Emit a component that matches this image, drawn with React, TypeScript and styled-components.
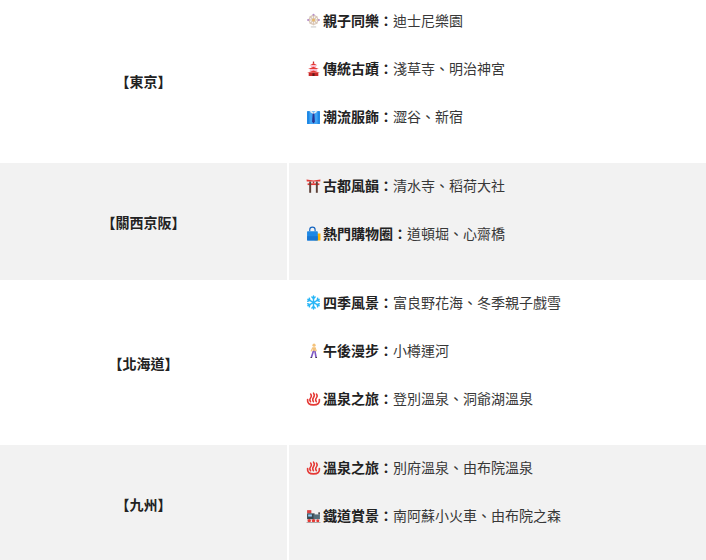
import { Fragment } from "react";
import styled, { createGlobalStyle } from "styled-components";

const GlobalStyle = createGlobalStyle`
  html, body {
    margin: 0;
    padding: 0;
    background: #ffffff;
  }
  body {
    font-family: "Noto Sans CJK TC", "Noto Sans", sans-serif;
    color: #333333;
  }
`;

const Table = styled.div`
  display: grid;
  grid-template-columns: 287px 1fr;
  column-gap: 2px;
  margin-top: -2px;
  width: 706px;
  background: #ffffff;
`;

const RegionCell = styled.div<{ $shade: boolean }>`
  display: flex;
  align-items: center;
  justify-content: center;
  background: ${({ $shade }) => ($shade ? "#f2f2f2" : "#ffffff")};
  font-size: 14px;
  font-weight: 700;
  color: #222222;
`;

const SpotCell = styled.div<{ $shade: boolean }>`
  display: flex;
  flex-direction: column;
  padding: 10px 16px 11px 17px;
  background: ${({ $shade }) => ($shade ? "#f2f2f2" : "#ffffff")};
`;

const Spot = styled.div`
  display: flex;
  align-items: center;
  height: 24px;
  margin-bottom: 24px;
  font-size: 14px;
  line-height: 24px;
  color: #383838;
  white-space: nowrap;
`;

const IconBox = styled.span`
  display: inline-flex;
  width: 15px;
  height: 15px;
  margin-right: 2px;
  svg {
    width: 15px;
    height: 15px;
  }
`;

const Label = styled.b`
  font-weight: 700;
  color: #222222;
`;

const icons: Record<string, JSX.Element> = {
  wheel: (
    <svg viewBox="0 0 14 14">
      <g stroke="#d9c7b8" strokeWidth="1.2" fill="none">
        <circle cx="7" cy="6.5" r="4" />
        <line x1="7" y1="1.5" x2="7" y2="11.5" />
        <line x1="2" y1="6.5" x2="12" y2="6.5" />
        <line x1="3.5" y1="3" x2="10.5" y2="10" />
        <line x1="10.5" y1="3" x2="3.5" y2="10" />
      </g>
      <circle cx="7" cy="6.5" r="1.4" fill="#e8b96a" />
      <circle cx="7" cy="1.6" r="1" fill="#b58ec9" />
      <circle cx="2" cy="6.5" r="1" fill="#b58ec9" />
      <circle cx="12" cy="6.5" r="1" fill="#b58ec9" />
      <line x1="4.5" y1="13" x2="9.5" y2="13" stroke="#c9c9c9" strokeWidth="1" />
    </svg>
  ),
  pagoda: (
    <svg viewBox="0 0 14 14">
      <rect x="6.4" y="0.5" width="1.2" height="2" fill="#c62828" />
      <path d="M3.5 4 L7 2 L10.5 4 Z" fill="#e53935" />
      <rect x="4.5" y="4" width="5" height="1.6" fill="#f8bbd0" />
      <path d="M2 7.5 L7 5.3 L12 7.5 Z" fill="#e53935" />
      <rect x="3.5" y="7.5" width="7" height="1.8" fill="#f8bbd0" />
      <path d="M1 11 L7 8.8 L13 11 Z" fill="#e53935" />
      <rect x="2.5" y="11" width="9" height="3" fill="#c62828" />
      <rect x="6" y="11.5" width="2" height="2.5" fill="#5d1a1a" />
    </svg>
  ),
  shirt: (
    <svg viewBox="0 0 14 14">
      <rect x="1" y="2" width="12" height="12" rx="1.5" fill="#42a5f5" />
      <rect x="1" y="2" width="2.2" height="12" fill="#1e88e5" />
      <rect x="10.8" y="2" width="2.2" height="12" fill="#1e88e5" />
      <path d="M4 1 L7 3.5 L10 1 L10 3 L7 5 L4 3 Z" fill="#eceff1" />
      <path d="M6.2 4.2 L7.8 4.2 L8.3 12 L7 13.5 L5.7 12 Z" fill="#283593" />
    </svg>
  ),
  torii: (
    <svg viewBox="0 0 14 14">
      <path d="M0.5 1.5 Q7 3 13.5 1.5 L13.3 3.3 L0.7 3.3 Z" fill="#e53935" />
      <rect x="1.5" y="5" width="11" height="1.6" fill="#e53935" />
      <rect x="3" y="3.3" width="1.8" height="10.5" fill="#5d4037" />
      <rect x="9.2" y="3.3" width="1.8" height="10.5" fill="#5d4037" />
      <rect x="6.3" y="3.3" width="1.4" height="1.7" fill="#c62828" />
    </svg>
  ),
  bags: (
    <svg viewBox="0 0 14 14">
      <rect x="8" y="7" width="5.5" height="6.5" fill="#ffb300" />
      <path d="M3.5 5 V3.5 A2.5 2.5 0 0 1 8.5 3.5 V5" stroke="#1565c0" strokeWidth="1.1" fill="none" />
      <rect x="1" y="5" width="10" height="8.5" rx="0.6" fill="#1e88e5" />
      <rect x="1" y="9.5" width="10" height="4" fill="#1976d2" />
    </svg>
  ),
  snow: (
    <svg viewBox="0 0 14 14">
      <g stroke="#29b6f6" strokeWidth="1.4" strokeLinecap="round" fill="none">
        <line x1="7" y1="1" x2="7" y2="13" />
        <line x1="1.8" y1="4" x2="12.2" y2="10" />
        <line x1="1.8" y1="10" x2="12.2" y2="4" />
        <path d="M5.5 1.8 L7 3.2 L8.5 1.8" />
        <path d="M5.5 12.2 L7 10.8 L8.5 12.2" />
        <path d="M1.6 5.8 L3.5 5 L3.1 3" />
        <path d="M12.4 8.2 L10.5 9 L10.9 11" />
        <path d="M1.6 8.2 L3.5 9 L3.1 11" />
        <path d="M12.4 5.8 L10.5 5 L10.9 3" />
      </g>
    </svg>
  ),
  walk: (
    <svg viewBox="0 0 14 14">
      <circle cx="7.5" cy="2" r="1.5" fill="#f4c27a" />
      <path d="M6.3 4 L8.6 4 L9 8 L6.2 8 Z" fill="#f4c27a" />
      <path d="M6.3 4.5 L4.8 7.5" stroke="#f4c27a" strokeWidth="1" strokeLinecap="round" />
      <path d="M8.6 4.5 L9.6 7.3" stroke="#f4c27a" strokeWidth="1" strokeLinecap="round" />
      <path d="M6.8 8 L5 13.5" stroke="#7e57c2" strokeWidth="1.5" strokeLinecap="round" />
      <path d="M8.4 8 L9.4 13.5" stroke="#7e57c2" strokeWidth="1.5" strokeLinecap="round" />
      <path d="M4.3 13.5 L5.5 13.5 M9 13.5 L10.3 13.5" stroke="#424242" strokeWidth="1" />
    </svg>
  ),
  onsen: (
    <svg viewBox="0 0 14 14">
      <path d="M1.5 8 Q1 13 7 13 Q13 13 12.5 8" stroke="#e53935" strokeWidth="1.6" fill="none" strokeLinecap="round" />
      <g stroke="#e53935" strokeWidth="1.4" fill="none" strokeLinecap="round">
        <path d="M4.3 10 Q2.8 8.2 4.3 6.4 Q5.8 4.6 4.3 2.8" />
        <path d="M7 10 Q5.5 8 7 6 Q8.5 4 7 2" />
        <path d="M9.7 10 Q8.2 8.2 9.7 6.4 Q11.2 4.6 9.7 2.8" />
      </g>
    </svg>
  ),
  train: (
    <svg viewBox="0 0 14 14">
      <rect x="1" y="2" width="4" height="3" fill="#d84343" />
      <rect x="1" y="5" width="7" height="5.5" fill="#37474f" />
      <rect x="7" y="6" width="6" height="4.5" fill="#546e7a" />
      <rect x="2" y="6" width="3.5" height="2" fill="#90caf9" />
      <rect x="11.5" y="4" width="1.5" height="2" fill="#424242" />
      <circle cx="3" cy="11.8" r="1.6" fill="#e53935" />
      <circle cx="7" cy="11.8" r="1.6" fill="#e53935" />
      <circle cx="11" cy="11.8" r="1.4" fill="#e53935" />
      <rect x="0.5" y="13.2" width="13" height="0.8" fill="#9e9e9e" />
    </svg>
  ),
};

type SpotItem = { icon: string; label: string; places: string };
type Region = { name: string; spots: SpotItem[] };

const regions: Region[] = [
  {
    name: "【東京】",
    spots: [
      { icon: "wheel", label: "親子同樂", places: "迪士尼樂園" },
      { icon: "pagoda", label: "傳統古蹟", places: "淺草寺、明治神宮" },
      { icon: "shirt", label: "潮流服飾", places: "澀谷、新宿" },
    ],
  },
  {
    name: "【關西京阪】",
    spots: [
      { icon: "torii", label: "古都風韻", places: "清水寺、稻荷大社" },
      { icon: "bags", label: "熱門購物圈", places: "道頓堀、心齋橋" },
    ],
  },
  {
    name: "【北海道】",
    spots: [
      { icon: "snow", label: "四季風景", places: "富良野花海、冬季親子戲雪" },
      { icon: "walk", label: "午後漫步", places: "小樽運河" },
      { icon: "onsen", label: "溫泉之旅", places: "登別溫泉、洞爺湖溫泉" },
    ],
  },
  {
    name: "【九州】",
    spots: [
      { icon: "onsen", label: "溫泉之旅", places: "別府溫泉、由布院溫泉" },
      { icon: "train", label: "鐵道賞景", places: "南阿蘇小火車、由布院之森" },
    ],
  },
];

const App = () => {
  return (
    <>
      <GlobalStyle />
      <Table>
        {regions.map((region, i) => (
          <Fragment key={region.name}>
            <RegionCell $shade={i % 2 === 1}>{region.name}</RegionCell>
            <SpotCell $shade={i % 2 === 1}>
              {region.spots.map((spot) => (
                <Spot key={spot.label + spot.places}>
                  <IconBox>{icons[spot.icon]}</IconBox>
                  <Label>{spot.label}：</Label>
                  {spot.places}
                </Spot>
              ))}
            </SpotCell>
          </Fragment>
        ))}
      </Table>
    </>
  );
};

export default App;
